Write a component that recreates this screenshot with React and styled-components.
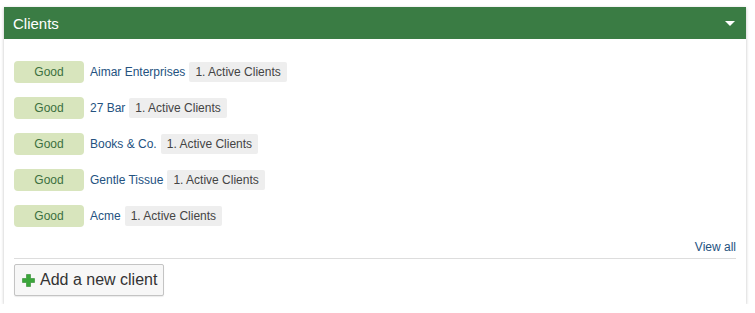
import React from "react";
import styled, { createGlobalStyle } from "styled-components";

const GlobalStyle = createGlobalStyle`
  body {
    margin: 0;
    background: #fff;
    font-family: "Liberation Sans", Arial, sans-serif;
  }
`;

const Page = styled.div`
  padding: 7px 9px 0 4px;
`;

const Panel = styled.section`
  width: 742px;
  background: #fff;
  box-shadow: 0 1px 3px rgba(0, 0, 0, 0.25);
`;

const PanelHeader = styled.header`
  height: 32px;
  display: flex;
  align-items: center;
  justify-content: space-between;
  padding: 0 11px 0 9px;
  background: #3a7c44;
  color: #fff;
  font-size: 15px;
`;

const Caret = styled.span`
  width: 0;
  height: 0;
  border-left: 5px solid transparent;
  border-right: 5px solid transparent;
  border-top: 5px solid #fff;
`;

const PanelBody = styled.div`
  padding: 22px 10px 8px;
`;

const ClientList = styled.ul`
  list-style: none;
  margin: 0;
  padding: 0;
  display: flex;
  flex-direction: column;
  gap: 14px;
`;

const ClientRow = styled.li`
  display: flex;
  align-items: center;
  gap: 4px;
  font-size: 12px;
`;

const Status = styled.span`
  width: 70px;
  height: 22px;
  display: inline-flex;
  align-items: center;
  justify-content: center;
  border-radius: 4px;
  background: #d8e5bd;
  color: #3c703f;
  margin-right: 2px;
`;

const ClientName = styled.a`
  color: #24527f;
  text-decoration: none;
`;

const Tag = styled.span`
  height: 20px;
  display: inline-flex;
  align-items: center;
  padding: 0 6px;
  background: #eeeeee;
  color: #444;
  border-radius: 2px;
`;

const ViewAll = styled.div`
  margin-top: 13px;
  padding-bottom: 4px;
  text-align: right;
  font-size: 12px;
  border-bottom: 1px solid #dddddd;

  a {
    color: #24527f;
    text-decoration: none;
  }
`;

const AddButton = styled.button`
  margin-top: 5px;
  height: 32px;
  display: inline-flex;
  align-items: center;
  gap: 5px;
  padding: 0 6px 0 7px;
  background: #f7f7f7;
  border: 1px solid #c4c4c4;
  border-radius: 2px;
  box-shadow: 0 1px 1px rgba(0, 0, 0, 0.08);
  color: #333;
  font-family: inherit;
  font-size: 16px;
`;

const PlusIcon = () => (
  <svg width="13" height="13" viewBox="0 0 13 13">
    <path
      d="M4.5 0.5h4v4h4v4h-4v4h-4v-4h-4v-4h4z"
      fill="#3aa63a"
      stroke="#2f8a2f"
      strokeWidth="0.6"
      strokeLinejoin="round"
    />
  </svg>
);

const clients = [
  "Aimar Enterprises",
  "27 Bar",
  "Books & Co.",
  "Gentle Tissue",
  "Acme",
];

export default function App() {
  return (
    <>
      <GlobalStyle />
      <Page>
        <Panel>
          <PanelHeader>
            Clients
            <Caret />
          </PanelHeader>
          <PanelBody>
            <ClientList>
              {clients.map((name) => (
                <ClientRow key={name}>
                  <Status>Good</Status>
                  <ClientName href="#">{name}</ClientName>
                  <Tag>1. Active Clients</Tag>
                </ClientRow>
              ))}
            </ClientList>
            <ViewAll>
              <a href="#">View all</a>
            </ViewAll>
            <AddButton type="button">
              <PlusIcon />
              Add a new client
            </AddButton>
          </PanelBody>
        </Panel>
      </Page>
    </>
  );
}
